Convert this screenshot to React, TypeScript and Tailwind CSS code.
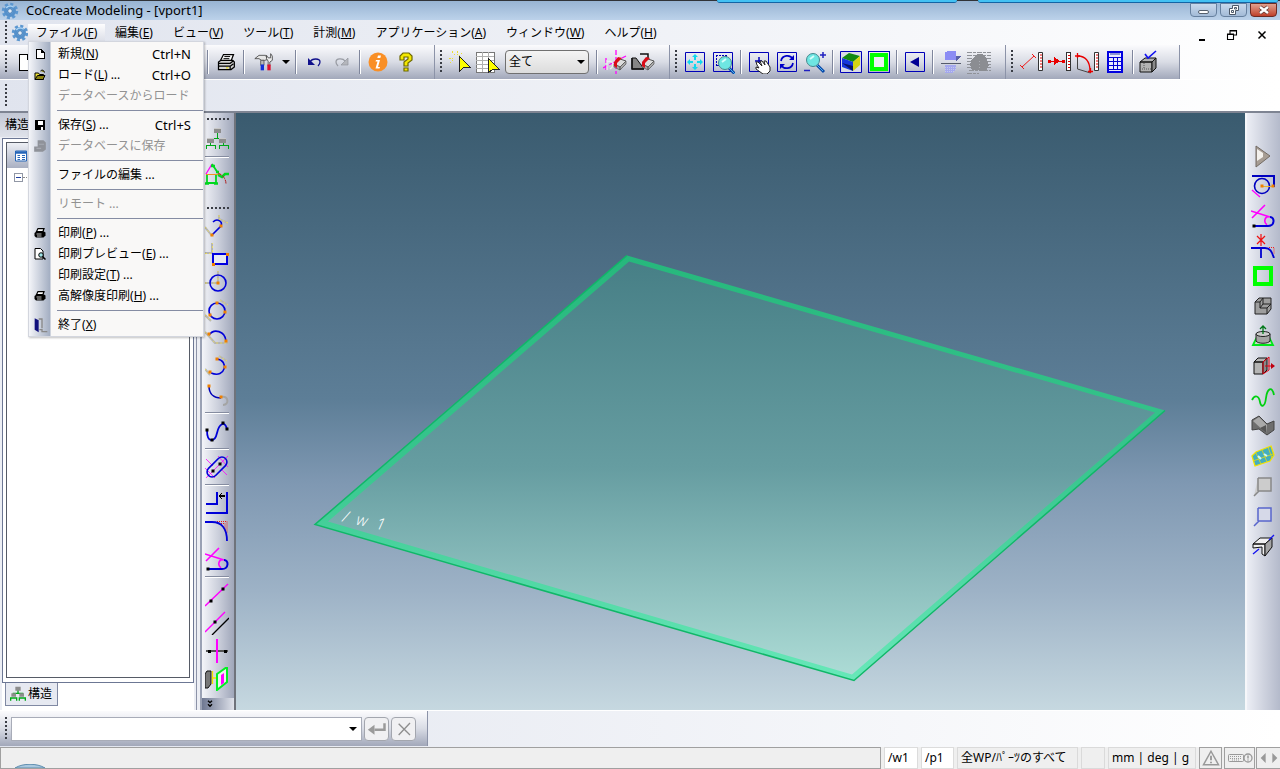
import type { ReactNode } from 'react'

interface IconProps {
  children: ReactNode
  className?: string
  smooth?: boolean
}

// Every tool drawing is made on a 24 x 24 grid
function Icon({ children, className = 'w-6 h-6', smooth = false }: IconProps) {
  return (
    <svg
      viewBox="0 0 24 24"
      className={`${className} shrink-0`}
      fill="none"
      shapeRendering={smooth ? 'auto' : 'crispEdges'}
      aria-hidden="true"
    >
      {children}
    </svg>
  )
}

const Gear = () => (
  <Icon className="w-[18px] h-[18px]" smooth>
    <circle cx="12" cy="12" r="9" stroke="#5c97d0" strokeWidth="4" strokeDasharray="4 3.07" />
    <circle cx="12" cy="12" r="6" fill="#6fa9dd" stroke="#5590ca" strokeWidth="4" />
    <path d="M7 8c2-3 7-4 10-1" stroke="#a9d2f3" strokeWidth="2" />
    <circle cx="12" cy="12" r="3" fill="#e2edf8" stroke="#2d65a4" />
  </Icon>
)

const NewDoc = () => (
  <Icon>
    <path d="M6 4h8l5 5v11H6z" fill="#fff" stroke="#000" />
    <path d="M14 4v5h5" stroke="#000" />
  </Icon>
)

const Printer = () => (
  <Icon className="w-5 h-5" smooth>
    <path d="M9 3h12l-3 8H5z" fill="#fff" stroke="#000" strokeWidth="1.500" />
    <path d="M10 5.500h7M9 8h7" stroke="#000" strokeWidth="1.200" />
    <path d="M3 12l3-2h14l2 2v6l-4 3H3z" fill="#d4d4d4" stroke="#000" strokeWidth="1.500" />
    <path d="M3 13.500h14l4-3M3 17h14v4M17 17l4-3" stroke="#000" strokeWidth="1.500" />
    <path d="M12 19h3" stroke="#e8d820" strokeWidth="1.500" />
  </Icon>
)

const Tools = () => (
  <Icon className="w-5 h-5" smooth>
    <path d="M1 8l5-4h8l2 5-3 1H9L6 8z" fill="#e6e6e6" stroke="#444" />
    <path d="M8 10h4v6H8z" fill="#bbb" stroke="#555" />
    <path d="M8 15h4v7H8z" fill="#1230d8" />
    <path d="M17 11l-2-3V4l2 3h3V2l2 3v5l-3 2v5h-2z" fill="#eee" stroke="#444" />
    <path d="M16 15h4v7h-4z" fill="#e01030" />
  </Icon>
)

const Undo = () => (
  <Icon smooth>
    <path d="M6 8v7h7z" fill="#10108c" />
    <path d="M8 12c2-4 10-4 10 0 0 2-1 3-2 4" stroke="#10108c" strokeWidth="1.300" />
  </Icon>
)

const Redo = () => (
  <Icon smooth>
    <path d="M18 8v7h-7z" fill="#b4b6bc" stroke="#93969e" strokeWidth=".7" />
    <path d="M15 11c-2-3-9-3-9 1 0 2 1 3 2 4" stroke="#999ca4" strokeWidth="1.300" />
  </Icon>
)

const Info = () => (
  <Icon smooth>
    <circle cx="12" cy="12" r="9.500" fill="#f98f26" />
    <path d="M12 5.500h3l-.7 2.500h-3zM10 10h4l-2 7h2l-.5 1.500H9.500l2-7H9.500z" fill="#fff" />
  </Icon>
)

const Help = () => (
  <Icon smooth>
    <path d="M6 9V6l3-3h6l3 3v4l-4 3v3h-4v-4l4-3V7h-4v3H6zM10 18h4v3h-4z" fill="#f4e800" stroke="#6d6800" strokeWidth="1.2" />
  </Icon>
)

const Pick = () => (
  <Icon>
    <path d="M4 1l3 4M9 1v4M1 8h4M14 3l-3 3M2 13l3-3" stroke="#eadf35" strokeDasharray="2 1" />
    <path d="M11 6l11 11h-6l-5 5z" fill="#ffff00" stroke="#222" />
  </Icon>
)

const PickList = () => (
  <Icon>
    <path d="M0 2h18v20H0z" fill="#fff" stroke="#777" />
    <path d="M0 6h18M0 10h18M0 14h18M0 18h18M6 2v20M12 2v20" stroke="#b0b0b0" />
    <path d="M12 8l11 11h-6l-5 4z" fill="#ffff00" stroke="#222" />
  </Icon>
)

const Eraser = () => (
  <>
    <path d="M11 14l6-5 6 2-6 6z" fill="#ddd" stroke="#555" />
    <path d="M11 14l6 3v3l-6-3zM17 17l6-6v3l-6 6z" fill="#aaa" stroke="#555" strokeWidth=".7" />
    <path d="M11 12l4-5 4 1-5 5v5l-3-2z" fill="#d80d18" />
  </>
)

const EraseGeometry = () => (
  <Icon smooth>
    <path d="M13 0v24M0 18l23-12M3 8v12" stroke="#f0f" strokeWidth="1.300" strokeDasharray="5 2" />
    <path d="M4 10v10M4 12c6-3 8 4 3 7M15 4h6M15 2v7" stroke="#eee" strokeWidth="1.300" />
    <Eraser />
  </Icon>
)

const EraseFace = () => (
  <Icon smooth>
    <path d="M1 8h4l8 11H1z" fill="#858585" stroke="#111" />
    <path d="M9 4h8v5M1 8v11h12" stroke="#111" strokeWidth="1.500" />
    <Eraser />
  </Icon>
)

const BlueFrame = ({ children }: { children: ReactNode }) => (
  <Icon smooth>
    <path d="M2.500 2.500h19v19h-19z" stroke="#0000b8" />
    {children}
  </Icon>
)

const Lens = () => (
  <>
    <path d="M14 15l7 7" stroke="#0848a8" strokeWidth="3" />
    <path d="M14 15l6 6" stroke="#4fb0f0" />
    <circle cx="10" cy="10" r="6.500" fill="#6ee6e2" stroke="#45888e" />
    <path d="M7 9l4-3" stroke="#d6fffb" strokeWidth="2" />
  </>
)

const FitAll = () => (
  <BlueFrame>
    <path d="M12 4l3 3h-2v3h-2V7H9zM12 20l3-3h-2v-3h-2v3H9zM4 12l3-3v2h3v2H7v2zM20 12l-3-3v2h-3v2h3v2z" fill="#12d8ee" />
  </BlueFrame>
)

const ZoomWindow = () => (
  <Icon smooth>
    <path d="M2.500 2.500h19v19h-19z" stroke="#0000b8" />
    <path d="M5 5.500h11M5.500 5v11M15.500 5v4M6 15.500h3" stroke="#0000b8" strokeDasharray="2 1" />
    <g transform="translate(4 3)"><Lens /></g>
  </Icon>
)

const Pan = () => (
  <BlueFrame>
    <path d="M8 11h7M12 7v6" stroke="#0000b8" strokeWidth="1.500" />
    <path d="M10 15l-1-3 2 0 4 4-2-5 2 0 3 4-1-4 2 0 4 6v4l-3 3h-4l-7-5 0-2 3 1z" fill="#fff" stroke="#222" />
  </BlueFrame>
)

const Rotate = () => (
  <BlueFrame>
    <path d="M6 11c1-6 9-7 12-2M18 13c-1 6-9 7-12 2" stroke="#0000c8" strokeWidth="1.700" />
    <path d="M19 5v5h-5zM5 19v-5h5z" fill="#0000c8" />
  </BlueFrame>
)

const Zoom = () => (
  <Icon smooth>
    <Lens />
    <path d="M17 5h6M20 2v6M1 20.500h6" stroke="#2020c0" strokeWidth="1.500" />
  </Icon>
)

const Shaded = () => (
  <Icon smooth>
    <path d="M1.500 1.500h21v21h-21z" fill="#d9dce6" stroke="#0000b8" />
    <path d="M3 8l7-5 11 3-7 6z" fill="#118a12" />
    <path d="M3 8l11 4v9L3 17z" fill="#1537dd" />
    <path d="M14 12l7-6v9l-7 6z" fill="#d6d512" />
    <path d="M3 13l11 8v-5z" fill="#071368" />
  </Icon>
)

const GreenFrame = () => (
  <Icon>
    <path d="M1.500 1.500h21v21h-21z" stroke="#0000b8" />
    <path d="M5 5h14v14H5z" fill="#eceef4" stroke="#00ff00" strokeWidth="4" />
  </Icon>
)

const PlainGreenFrame = () => (
  <Icon>
    <path d="M4 4h16v16H4z" stroke="#00ff00" strokeWidth="4" />
  </Icon>
)

const Previous = () => (
  <BlueFrame>
    <path d="M7 12l9-5v10z" fill="#000094" />
  </BlueFrame>
)

const Mirror = () => (
  <Icon>
    <path d="M6 2l3-1h8v9H6z" fill="#8b8cf4" />
    <path d="M17 6h5l-5 5z" fill="#5960a8" />
    <path d="M2 13h20" stroke="#555b6b" />
    <path d="M6 15h11v5l-4 3H6z" fill="#a4a8ee" />
    <path d="M6 17h11M6 19h11M6 21h9" stroke="#c4c8ec" strokeDasharray="1 1" />
  </Icon>
)

const Haze = () => (
  <Icon>
    <path d="M0 2h24M0 5h24M0 8h24M0 11h24M0 14h24M0 17h24M2 20h22M0 23h12" stroke="#8f9298" strokeDasharray="5 1 3 1" />
    <path d="M5 20l-2-5 2-6 5-5h5l5 5 2 6-3 6z" fill="#8b8d92" />
    <path d="M12 11v7" stroke="#aaacb3" strokeDasharray="1 2" />
  </Icon>
)

const Ruler = () => (
  <>
    <path d="M19.500 2.500h4v18h-4z" fill="#fff" stroke="#333" />
    <path d="M21 5h2M21 8h2M21 11h2M21 14h2M21 17h2" stroke="#e00000" />
  </>
)

const MeasureDistance = () => (
  <Icon smooth>
    <path d="M3 17L15 6M1 15l4 4M13 4l4 4" stroke="#f01818" />
    <Ruler />
  </Icon>
)

const MeasureHorizontal = () => (
  <Icon>
    <path d="M1 11h17" stroke="#e80000" />
    <path d="M1 10h3v3H1zM15 10h3v3h-3zM7 7l6 4-6 4z" fill="#e80000" />
    <Ruler />
  </Icon>
)

const MeasureAngle = () => (
  <Icon smooth>
    <path d="M2.500 5v14l13 4" stroke="#444" />
    <path d="M3 6c7 0 12 5 12 15" stroke="#e80000" strokeWidth="1.300" />
    <path d="M0 6h5M2.500 3v5M13 21.500h5M15.500 18v5" stroke="#e80000" strokeWidth="1.300" />
    <Ruler />
  </Icon>
)

const Calculator = () => (
  <Icon>
    <path d="M5 2h14v20H5z" fill="#e8ecff" stroke="#0000e0" strokeWidth="2" />
    <path d="M6 7h12M6 11h12M6 15h12M6 19h12M10 8v12M14 8v12" stroke="#0000d0" />
    <path d="M7 4h10" stroke="#8a96d0" strokeWidth="2" />
  </Icon>
)

const CheckPart = () => (
  <Icon smooth>
    <path d="M1 12l5-4h11l-4 4zM1 12h12v10H1z" fill="#b2b2b2" stroke="#111" />
    <path d="M13 12l4-4v10l-4 4z" fill="#898989" stroke="#111" />
    <path d="M5 13v6M3 19h9" stroke="#555" strokeDasharray="1 1" />
    <path d="M6 4l3 4 8-7" stroke="#1010f0" strokeWidth="1.600" />
  </Icon>
)

// Left tool strip

const PartTree = () => (
  <Icon>
    <path d="M12 6v5M5 15v-4h14v4M1 22v-4h9v4M14 22v-4h9v4M5 15v3M18 15v3" stroke="#00a818" />
    <path d="M9 1h7v5H9zM2 11h7v5H2zM14 11h7v5h-7z" fill="#8d8d8d" />
    <path d="M9 1h7M2 11h7M14 11h7" stroke="#c8c8c8" />
  </Icon>
)

const Redline = () => (
  <Icon smooth>
    <path d="M1 11L7 1" stroke="#f0f" strokeWidth="1.300" />
    <path d="M1 11.500h15" stroke="#f09020" />
    <path d="M2 12v8h9v-8M7 1l6 9" stroke="#00d820" strokeWidth="1.800" />
    <path d="M0 20.500h4M9 20.500h4M6 3h4M11 9h3M13 12l4 2 3-3h4" stroke="#00d820" strokeWidth="2.500" />
    <path d="M13 10c5 2 8 6 8 11" stroke="#b02020" strokeDasharray="4 1" />
  </Icon>
)

const Dot = ({ x, y, fill = '#f08000' }: { x: number; y: number; fill?: string }) => (
  <rect x={x - 1.5} y={y - 1.5} width="3" height="3" fill={fill} />
)

const Guide = ({ d }: { d: string }) => (
  <>
    <path d={d} stroke="#b4b4b4" strokeWidth="2" />
    <path d={d} stroke="#eadb65" strokeDasharray="2 2" />
  </>
)

const Polyline = () => (
  <Icon smooth>
    <Guide d="M0 12l7 9M14 0v5M14 4l9 4" />
    <path d="M7 20l9-9c2-5-4-8-8-4" stroke="#0000d8" strokeWidth="1.600" />
    <Dot x={7} y={20} /><Dot x={16} y={11} />
  </Icon>
)

const Rect = () => (
  <Icon>
    <Guide d="M0 10h7V0" />
    <path d="M8 11h14v10H8z" fill="#e8eaf2" stroke="#0000e0" strokeWidth="2" />
    <Dot x={22} y={11} /><Dot x={8} y={21} />
  </Icon>
)

const CircleCenter = () => (
  <Icon smooth>
    <Guide d="M0 12h13V0" />
    <circle cx="13" cy="12" r="8" stroke="#0000d8" strokeWidth="1.600" />
    <Dot x={13} y={12} />
  </Icon>
)

const CirclePoints = () => (
  <Icon smooth>
    <Guide d="M0 16l6 6M15 1l8 5" />
    <circle cx="12" cy="12" r="8" stroke="#0000d8" strokeWidth="1.600" />
    <Dot x={12} y={4} /><Dot x={20} y={13} /><Dot x={5} y={16} />
  </Icon>
)

const ArcCenter = () => (
  <Icon smooth>
    <Guide d="M0 5l10 11h13" />
    <path d="M4 8c5-7 16-4 17 6" stroke="#0000d8" strokeWidth="1.600" />
    <Dot x={4} y={7} /><Dot x={21} y={14} />
  </Icon>
)

const ArcPoints = () => (
  <Icon smooth>
    <Guide d="M0 14l5 6M14 1l8 5" />
    <path d="M12 4c12 1 9 20-6 14" stroke="#0000d8" strokeWidth="1.600" />
    <Dot x={12} y={4} /><Dot x={20} y={12} /><Dot x={5} y={17} />
  </Icon>
)

const ArcTangent = () => (
  <Icon smooth>
    <path d="M17 14c6-2 8 8 1 8" stroke="#a4a4a4" strokeWidth="2" />
    <path d="M4 3c0 8 5 12 12 12" stroke="#0000b8" strokeWidth="1.600" />
    <Dot x={4} y={3} /><Dot x={16} y={14} />
  </Icon>
)

const Spline = () => (
  <Icon smooth>
    <path d="M2 11c0 14 8 12 10 3s8-13 10-4" stroke="#0000d8" strokeWidth="1.800" />
    <Dot x={2} y={11} fill="#000" /><Dot x={7} y={21} fill="#000" />
    <Dot x={18} y={4} fill="#000" /><Dot x={22} y={10} fill="#000" />
  </Icon>
)

const Slot = () => (
  <Icon smooth>
    <path d="M1 23L23 1M0 13l10 10M13 1l10 11M1 4l7 7M16 14l6 6" stroke="#f0f" strokeWidth=".8" />
    <rect x="0" y="7" width="24" height="10" rx="5" transform="rotate(-45 12 12)" stroke="#0000d8" strokeWidth="1.600" />
    <Dot x={8} y={16} fill="#000" /><Dot x={15} y={9} fill="#000" />
  </Icon>
)

const Offset = () => (
  <Icon>
    <path d="M1 13h11V1M1 22h21V1" stroke="#0000d8" strokeWidth="2" />
    <path d="M14 5h6M17 2l-3 3 3 3" stroke="#000" strokeWidth="1.300" />
  </Icon>
)

const Fillet = () => (
  <Icon smooth>
    <path d="M12 2.500h10v11M14 4.500h6v7" stroke="#e81818" strokeDasharray="1 1" />
    <path d="M0 3h7c10 0 15 7 15 19" stroke="#0000d8" strokeWidth="1.800" />
  </Icon>
)

const TangentCurve = () => (
  <Icon smooth>
    <path d="M1 14L14 1M0 7l19 6M19 13c-5-2-7 5-3 8" stroke="#f0f" strokeWidth="1.600" />
    <path d="M3 22h14c7 0 7-9 2-9" stroke="#0000d8" strokeWidth="2" />
    <Dot x={3} y={22} fill="#000" />
  </Icon>
)

const ConstructionLine = () => (
  <Icon smooth>
    <path d="M0 23L23 1" stroke="#f0f" strokeWidth="1.500" />
    <Dot x={6} y={18} fill="#000" /><Dot x={18} y={6} fill="#000" />
  </Icon>
)

const ParallelLine = () => (
  <Icon smooth>
    <path d="M0 21L20 1" stroke="#f0f" strokeWidth="1.500" />
    <path d="M7 24L24 7" stroke="#000" strokeWidth="1.300" />
    <Dot x={10} y={11} fill="#000" />
  </Icon>
)

const CenterLine = () => (
  <Icon>
    <path d="M1 12h22" stroke="#555" strokeWidth="2" />
    <path d="M12 0v24" stroke="#f0f" strokeWidth="2" />
    <Dot x={4} y={12} fill="#000" /><Dot x={20} y={12} fill="#000" />
  </Icon>
)

const ProjectFace = () => (
  <Icon smooth>
    <path d="M0 7l2-3h4v13l-3 4H0z" fill="#777" stroke="#111" />
    <path d="M7.500 4v13M8 11h5" stroke="#f5e400" strokeWidth="1.300" />
    <path d="M12 7l10-7v15l-10 8z" fill="#eee" stroke="#00f020" strokeWidth="2" />
    <path d="M16 8l3-2v10l-3 2z" fill="#f0f" />
  </Icon>
)

// Right tool strip

const Play = () => (
  <Icon smooth>
    <path d="M5 2l14 10L5 23z" fill="#a79d94" stroke="#736b64" />
    <path d="M6 5l6 4v4l-6 4z" fill="#f4f1ed" />
  </Icon>
)

const Trim = () => (
  <Icon smooth>
    <path d="M1 2h22v11" stroke="#0000c0" strokeWidth="2" />
    <circle cx="11" cy="12" r="7.500" stroke="#0000c0" strokeWidth="1.600" />
    <path d="M1 16l8 7" stroke="#f0f" strokeWidth="1.300" />
    <path d="M11 12.500h11" stroke="#eab330" />
    <Dot x={11} y={12} /><Dot x={22} y={12} />
  </Icon>
)

const Split = () => (
  <Icon smooth>
    <path d="M6 2l8 8M14 2l-8 8M10 0v12" stroke="#f01010" strokeWidth="1.200" />
    <path d="M0 14h14c6 0 7 5 9 10M10 14v10" stroke="#0000d0" strokeWidth="1.800" />
    <path d="M18 13.500h5v6" stroke="#f02020" strokeDasharray="1 1" />
  </Icon>
)

const Machine = () => (
  <Icon smooth>
    <path d="M4 8l4-4h12v11l-4 5H4z" fill="#9e9e9e" stroke="#222" />
    <path d="M4 8h5v6h7v6M16 14l4-4M9 14l3-4h8M12 10V4M9 8l3-4" stroke="#222" />
  </Icon>
)

const Extrude = () => (
  <Icon smooth>
    <path d="M2 21l4-8h12l4 8z" fill="#c5d8c5" stroke="#00e818" strokeWidth="1.800" />
    <path d="M5 10v7c2 3 12 3 14 0v-7z" fill="#a4a4a4" stroke="#222" />
    <ellipse cx="12" cy="10" rx="7" ry="2.500" fill="#ccc" stroke="#222" />
    <path d="M12 10V2M9 5l3-3 3 3" stroke="#007818" strokeWidth="1.300" />
  </Icon>
)

const PullFace = () => (
  <Icon smooth>
    <path d="M3 8l4-4h9l-4 4zM3 8h9v12H3z" fill="#b4b4b4" stroke="#111" />
    <path d="M12 8l4-4v12l-4 4z" fill="#888" stroke="#111" />
    <path d="M12 8l6-5v13l-6 4z M14 12h9" stroke="#e00010" />
    <path d="M20 9l4 3-4 3z" fill="#c00010" />
  </Icon>
)

const Curve = () => (
  <Icon smooth>
    <path d="M1 16c3-6 7-4 8 2s5 5 6-4 6-13 8-3" stroke="#00d010" strokeWidth="1.800" />
  </Icon>
)

const Loft = () => (
  <Icon smooth>
    <path d="M1 6l7-4 8 8 7-3v9l-7 5-8-6-7 1z" fill="#6e6e6e" stroke="#444" />
    <path d="M2 7l6-4 8 8-1 8z" fill="#a9a9a9" />
    <path d="M9 14l6-3v8z" fill="#555" />
  </Icon>
)

const SurfacePatch = () => (
  <Icon smooth>
    <path d="M1 12l4-4 15-6 3 9-4 6-15 5z" fill="#44aebf" stroke="#f2e200" strokeWidth="1.300" />
    <path d="M2 17l20-7M5 9l5 11M11 6l5 12M17 3l4 11" stroke="#e8da10" strokeWidth=".8" />
    <path d="M7 12l3 3M13 10l3 2" stroke="#c8f8ff" strokeWidth="2" />
  </Icon>
)

const GrayTag = () => (
  <Icon smooth>
    <path d="M7 4h13v13H8l-5 5M7 17V4" fill="#ccc" stroke="#888" strokeWidth="1.500" />
  </Icon>
)

const BlueTag = () => (
  <Icon smooth>
    <path d="M7 4h13v13H8l-5 5M7 17V4" fill="#d6d9e8" stroke="#5865cc" strokeWidth="1.500" />
  </Icon>
)

const Bend = () => (
  <Icon smooth>
    <path d="M2 10l7-6h12l-7 6zM2 10h10l2 0v12l-3-2v-7l-9 1z" fill="#f0f0f0" stroke="#111" />
    <path d="M14 10l7-6v9l-7 9z" fill="#a4a4a4" stroke="#111" />
    <path d="M18 6l5-5M2 20l6-5" stroke="#1414f0" strokeWidth="1.300" />
  </Icon>
)

// File menu drawings

const MenuOpen = () => (
  <Icon className="w-3 h-3" smooth>
    <path d="M2 8h7l2 3h8v10H2z" fill="#e8de35" stroke="#000" strokeWidth="2" />
    <path d="M2 21l5-8h15l-4 8zM13 4c3-3 7-2 8 3" fill="#8c8410" stroke="#000" strokeWidth="2" />
  </Icon>
)

const MenuSave = () => (
  <Icon className="w-3 h-3">
    <path d="M2 2h20v20H2z" fill="#000" />
    <path d="M7 3h10v8H7z" fill="#fff" />
    <path d="M14 16h4v5h-4z" fill="#fff" />
  </Icon>
)

const MenuDatabase = () => (
  <Icon className="w-3.5 h-3.5" smooth>
    <path d="M8 2h10l4 4v12l-5 4H2v-9h6z" fill="#8f9299" />
    <path d="M10 9h9M6 16h8" stroke="#a7aab2" strokeWidth="2" />
  </Icon>
)

const MenuPreview = () => (
  <Icon className="w-3 h-3" smooth>
    <path d="M2 1h11l5 5v16H2z" fill="#fff" stroke="#000" strokeWidth="2" />
    <circle cx="14" cy="14" r="4.500" fill="#9fe4e8" stroke="#000" strokeWidth="2" />
    <path d="M17 17l6 6" stroke="#000" strokeWidth="3" />
  </Icon>
)

const MenuExit = () => (
  <Icon className="w-4 h-4" smooth>
    <path d="M4 2l6 3v18l-6-4z" fill="#10107c" />
    <path d="M10 3h5v14M11 19h4v3h8" stroke="#888" strokeWidth="2" />
  </Icon>
)

const MenuNew = () => (
  <Icon className="w-3 h-3">
    <path d="M5 3h9l6 6v12H5zM14 3v6h6" fill="#fff" stroke="#000" strokeWidth="2" />
  </Icon>
)

const MenuPrint = () => (
  <Icon className="w-3 h-3" smooth>
    <path d="M8 3h12l-2 6H5z" fill="#fff" stroke="#000" strokeWidth="2.500" />
    <path d="M1 12l4-3h15l3 2v6l-4 4H4l-3-3z" fill="#000" />
    <path d="M5 14h10M6 18h9" stroke="#fff" strokeWidth="1.500" />
  </Icon>
)

interface LabelProps {
  text: string
  hotkey?: string
  tail?: string
}

function Label({ text, hotkey, tail = '' }: LabelProps) {
  return (
    <span className="whitespace-pre">
      {text}
      {hotkey && <>(<u className="underline-offset-1">{hotkey}</u>)</>}
      {tail}
    </span>
  )
}

type MenuEntry = LabelProps & { icon?: ReactNode; shortcut?: string; disabled?: boolean }

const fileMenu: MenuEntry[][] = [
  [
    { text: '新規', hotkey: 'N', shortcut: 'Ctrl+N', icon: <MenuNew /> },
    { text: 'ロード', hotkey: 'L', tail: ' ...', shortcut: 'Ctrl+O', icon: <MenuOpen /> },
    { text: 'データベースからロード', disabled: true },
  ],
  [
    { text: '保存', hotkey: 'S', tail: ' ...', shortcut: 'Ctrl+S', icon: <MenuSave /> },
    { text: 'データベースに保存', disabled: true, icon: <MenuDatabase /> },
  ],
  [{ text: 'ファイルの編集 ...' }],
  [{ text: 'リモート ...', disabled: true }],
  [
    { text: '印刷', hotkey: 'P', tail: ' ...', icon: <MenuPrint /> },
    { text: '印刷プレビュー', hotkey: 'E', tail: ' ...', icon: <MenuPreview /> },
    { text: '印刷設定', hotkey: 'T', tail: ' ...' },
    { text: '高解像度印刷', hotkey: 'H', tail: ' ...', icon: <MenuPrint /> },
  ],
  [{ text: '終了', hotkey: 'X', icon: <MenuExit /> }],
]

const menus: LabelProps[] = [
  { text: '編集', hotkey: 'E' },
  { text: 'ビュー', hotkey: 'V' },
  { text: 'ツール', hotkey: 'T' },
  { text: '計測', hotkey: 'M' },
  { text: 'アプリケーション', hotkey: 'A' },
  { text: 'ウィンドウ', hotkey: 'W' },
  { text: 'ヘルプ', hotkey: 'H' },
]

function FileMenu() {
  return (
    <div className="absolute left-0 top-full z-20 w-44 border border-[#d3d6de] bg-[linear-gradient(90deg,#f4f5f9,#a3aec2_21px,#f9f8f7_22px)] py-px shadow-[1px_1px_2px_rgba(0,0,0,0.25)]">
      {fileMenu.map((group, i) => (
        <div key={i}>
          {i > 0 && <div className="ml-7 flex h-2 items-center"><div className="h-px w-full bg-[#858ca3]" /></div>}
          {group.map((item) => (
            <button
              key={item.text}
              disabled={item.disabled}
              className="flex h-[21px] w-full items-center pr-3 text-left text-black disabled:text-[#929292]"
            >
              <span className="flex w-[21px] shrink-0 justify-center">{item.icon}</span>
              <span className="ml-2 flex-1"><Label text={item.text} hotkey={item.hotkey} tail={item.tail} /></span>
              {item.shortcut && <span className="text-[13px] leading-4">{item.shortcut}</span>}
            </button>
          ))}
        </div>
      ))}
    </div>
  )
}

function Tool({ name, children }: { name: string; children: ReactNode }) {
  return (
    <button aria-label={name} className="flex h-7 w-7 shrink-0 items-center justify-center">
      {children}
    </button>
  )
}

const Grip = () => (
  <div className="flex w-[11px] shrink-0 justify-center">
    <div className="h-6 w-0.5 bg-[repeating-linear-gradient(180deg,#3a3d45_0_2px,transparent_2px_4px)]" />
  </div>
)

const Divider = () => (
  <div className="flex w-2 shrink-0 justify-center">
    <div className="h-6 w-0.5 border-l border-[#7f869c] bg-white" />
  </div>
)

const HGrip = () => (
  <div className="mx-auto h-0.5 w-6 bg-[repeating-linear-gradient(90deg,#3a3d45_0_2px,transparent_2px_4px)]" />
)

const HDivider = () => (
  <div className="flex h-2 w-7 shrink-0 items-center px-0.5">
    <div className="h-0.5 w-full border-t border-[#858ca0] bg-white" />
  </div>
)

const Caret = () => <div className="border-x-4 border-t-4 border-x-transparent border-t-black" />

function Toolbar({ children, className = '' }: { children: ReactNode; className?: string }) {
  return (
    <div className={`flex h-full shrink-0 items-center border-r border-[#8c93a8] bg-linear-to-b from-[#fbfbfd] via-[#d9dce5] to-[#a2a8ba] ${className}`}>
      {children}
    </div>
  )
}

function TitleBar() {
  return (
    <header className="relative flex h-5 shrink-0 items-center border-t border-[#303338] bg-linear-to-b from-[#98b4d3] to-[#bcd2ea] pl-px pr-[3px]">
      <Gear />
      <h1 className="ml-[7px] flex-1 pb-0.5 text-[13px] leading-4">CoCreate Modeling - [vport1]</h1>
      <div className="absolute right-[323px] top-[-1px] h-[3px] w-60 rounded-b-sm border-b border-[#1464a4] bg-[#43c1f3]" />
      <div className="absolute right-0.5 top-[-1px] h-[3px] w-[300px] rounded-b-sm border-b border-[#1464a4] bg-[#43c1f3]" />
      <div className="flex gap-[3px] pb-px">
        <button aria-label="最小化" className="flex h-3.5 w-[27px] items-end justify-center rounded-b-sm border border-[#66809f] bg-linear-to-b from-[#c8d9ec] to-[#a3bbd7] pb-0.5">
          <span className="h-1 w-[11px] rounded-xs border border-[#55606e] bg-white" />
        </button>
        <button aria-label="元に戻す" className="flex h-3.5 w-[27px] items-center justify-center rounded-b-sm border border-[#66809f] bg-linear-to-b from-[#c8d9ec] to-[#a3bbd7]">
          <Icon className="w-3 h-3" smooth>
            <path d="M9 3h12v10h-6v8H3V9h6z" fill="#fff" stroke="#4c5868" strokeWidth="2" />
            <path d="M7 13h4v4H7zM13 7h4v3h-4z" stroke="#4c5868" strokeWidth="2" />
          </Icon>
        </button>
        <button aria-label="閉じる" className="flex h-3.5 w-[27px] items-center justify-center rounded-b-sm border border-[#6d2a22] bg-linear-to-b from-[#e0a08f] to-[#bf3f29]">
          <Icon className="w-3 h-3" smooth>
            <path d="M4 6l16 12M20 6L4 18" stroke="#5d3430" strokeWidth="8" />
            <path d="M4 6l16 12M20 6L4 18" stroke="#fff" strokeWidth="5" />
          </Icon>
        </button>
      </div>
    </header>
  )
}

function MenuBar() {
  return (
    <nav className="flex h-[25px] shrink-0 items-center">
      <Grip />
      <Gear />
      <div className="relative -ml-px h-[17px]">
        <button className="h-[17px] w-[77px] bg-linear-to-b from-[#fdfdfe] to-[#dcdfe8]">
          <Label text="ファイル" hotkey="F" />
        </button>
        <FileMenu />
      </div>
      {menus.map((m) => (
        <button key={m.text} className="px-2.5"><Label text={m.text} hotkey={m.hotkey} /></button>
      ))}
      <div className="ml-auto flex gap-3.5 self-end pb-0.5 pr-2.5">
        <button aria-label="ウィンドウを最小化" className="flex h-4 w-4 items-end justify-center pb-0.5"><span className="h-0.5 w-1.5 bg-black" /></button>
        <button aria-label="ウィンドウを元に戻す" className="flex h-4 w-4 items-center justify-center">
          <Icon className="w-3 h-3" smooth><path d="M8 10V3h13v9h-5M8 4h13M3 10h12v11H3zM3 11h12" stroke="#000" strokeWidth="2.200" /></Icon>
        </button>
        <button aria-label="ウィンドウを閉じる" className="flex h-4 w-4 items-center justify-center">
          <Icon className="w-3 h-3" smooth><path d="M5 5l14 14M19 5L5 19" stroke="#000" strokeWidth="3" /></Icon>
        </button>
      </div>
    </nav>
  )
}

function ToolbarRow() {
  return (
    <div className="flex h-[34px] shrink-0">
      <Toolbar className="w-[435px] justify-between pr-3.5">
        <div className="flex items-center">
          <Grip />
          <Tool name="新規"><NewDoc /></Tool>
        </div>
        <div className="flex items-center">
          <Divider />
          <Tool name="印刷"><Printer /></Tool>
          <Divider />
          <button aria-label="ツール設定" className="flex h-7 w-11 items-center justify-center gap-2 pl-1"><Tools /><Caret /></button>
          <Divider />
          <Tool name="元に戻す"><Undo /></Tool>
          <Tool name="やり直し"><Redo /></Tool>
          <Divider />
          <Tool name="情報"><Info /></Tool>
          <Tool name="ヘルプ"><Help /></Tool>
        </div>
      </Toolbar>
      <Toolbar className="pr-3">
        <Grip />
        <Tool name="選択"><Pick /></Tool>
        <Tool name="選択リスト"><PickList /></Tool>
        <div className="relative ml-[3px] flex items-center">
          <select aria-label="選択フィルタ" className="h-6 w-[84px] appearance-none rounded-sm border border-[#707070] bg-linear-to-b from-[#f4f4f4] to-[#dcdcdc] pl-[3px] text-xs">
            <option>全て</option>
          </select>
          <div className="pointer-events-none absolute right-1"><Caret /></div>
        </div>
        <div className="w-1" />
        <Divider />
        <Tool name="形状を削除"><EraseGeometry /></Tool>
        <Tool name="面を削除"><EraseFace /></Tool>
      </Toolbar>
      <Toolbar className="pr-3">
        <Grip />
        <Tool name="全体表示"><FitAll /></Tool>
        <Tool name="窓拡大"><ZoomWindow /></Tool>
        <Divider />
        <Tool name="移動"><Pan /></Tool>
        <Tool name="回転"><Rotate /></Tool>
        <Tool name="拡大縮小"><Zoom /></Tool>
        <Divider />
        <Tool name="シェーディング"><Shaded /></Tool>
        <Tool name="ワークプレーン表示"><GreenFrame /></Tool>
        <Divider />
        <Tool name="前のビュー"><Previous /></Tool>
        <Divider />
        <Tool name="反射"><Mirror /></Tool>
        <Tool name="かすみ"><Haze /></Tool>
      </Toolbar>
      <Toolbar className="pr-3.5">
        <Grip />
        <Tool name="距離計測"><MeasureDistance /></Tool>
        <Tool name="水平計測"><MeasureHorizontal /></Tool>
        <Tool name="角度計測"><MeasureAngle /></Tool>
        <Tool name="計算機"><Calculator /></Tool>
        <Divider />
        <Tool name="パーツ検査"><CheckPart /></Tool>
      </Toolbar>
    </div>
  )
}

function StructurePanel() {
  return (
    <aside className="flex w-[197px] shrink-0 flex-col border-r border-[#8c93a8] bg-[#eceef4]">
      <h2 className="flex h-6 items-center bg-linear-to-b from-[#c3c8d5] to-[#dfe2ea] pl-[5px] text-xs">構造</h2>
      <div className="mx-0.5 mt-px flex flex-1 flex-col border border-[#6c7794] bg-white p-[3px] pb-1">
        <div className="flex-1 border border-[#565b66]">
          <div className="flex h-[25px] items-center bg-linear-to-b from-[#eef0f5] to-[#a9b0c2] pl-2">
            <Icon className="w-3 h-3" smooth>
              <path d="M1 2h22v20H1z" fill="#fff" stroke="#2666b8" strokeWidth="2" />
              <path d="M1 5h22" stroke="#2666b8" strokeWidth="5" />
              <path d="M5 11h5M5 15h5M5 19h5M14 11h6M14 15h6M14 19h6" stroke="#2666b8" strokeWidth="2" />
            </Icon>
          </div>
          <div className="flex items-center pl-[7px] pt-[5px]">
            <button aria-label="折りたたむ" className="flex h-[9px] w-[9px] items-center justify-center border border-[#9197a5]">
              <span className="h-px w-[5px] bg-[#2040a0]" />
            </button>
            <span className="w-4 border-t border-dotted border-[#888]" />
          </div>
        </div>
      </div>
      <div className="mx-0.5 flex h-[27px] bg-white pl-[3px]">
        <button className="flex h-[23px] w-[53px] items-center gap-0.5 border border-t-0 border-[#8089a3] bg-[#e6e9f1] pl-1 text-xs">
          <Icon className="w-4 h-4" smooth>
            <path d="M12 6v5M5 15v-4h14v4M1 22v-4h9v4M14 22v-4h9v4" stroke="#00a818" strokeWidth="2" />
            <path d="M8 1h8v6H8zM2 11h7v5H2zM14 11h7v5h-7z" fill="#8d8d8d" />
          </Icon>
          構造
        </button>
      </div>
    </aside>
  )
}

function LeftTools() {
  return (
    <div className="flex w-9 shrink-0 flex-col border-l-2 border-r-2 border-l-[#9aa1b4] border-r-[#6f737b] bg-linear-to-r from-[#f4f5f9] via-[#ccd0dc] to-[#a0a7ba] pl-px">
      <div className="flex h-3 items-center"><HGrip /></div>
      <Tool name="構造ツリー"><PartTree /></Tool>
      <HDivider />
      <Tool name="レッドライン"><Redline /></Tool>
      <div className="flex h-6 items-end pb-1"><HGrip /></div>
      <Tool name="線分"><Polyline /></Tool>
      <Tool name="長方形"><Rect /></Tool>
      <Tool name="円 中心"><CircleCenter /></Tool>
      <Tool name="円 3点"><CirclePoints /></Tool>
      <Tool name="円弧 中心"><ArcCenter /></Tool>
      <Tool name="円弧 3点"><ArcPoints /></Tool>
      <Tool name="円弧 接線"><ArcTangent /></Tool>
      <HDivider />
      <Tool name="スプライン"><Spline /></Tool>
      <HDivider />
      <Tool name="長穴"><Slot /></Tool>
      <HDivider />
      <Tool name="オフセット"><Offset /></Tool>
      <Tool name="フィレット"><Fillet /></Tool>
      <Tool name="接線"><TangentCurve /></Tool>
      <HDivider />
      <Tool name="補助線"><ConstructionLine /></Tool>
      <Tool name="平行線"><ParallelLine /></Tool>
      <Tool name="中心線"><CenterLine /></Tool>
      <Tool name="投影"><ProjectFace /></Tool>
      <button aria-label="その他" className="-ml-px mt-auto flex h-3 items-center bg-linear-to-r from-[#6f7892] to-[#dfe2ea] pl-1">
        <Icon className="w-2 h-2" smooth><path d="M6 2l6 6 6-6M6 13l6 6 6-6" stroke="#000" strokeWidth="4" /></Icon>
      </button>
    </div>
  )
}

const rightTools: [string, ReactNode][] = [
  ['実行', <Play />],
  ['トリム', <Trim />],
  ['接線', <TangentCurve />],
  ['分割', <Split />],
  ['ワークプレーン', <PlainGreenFrame />],
  ['加工', <Machine />],
  ['押し出し', <Extrude />],
  ['面移動', <PullFace />],
  ['曲線', <Curve />],
  ['ロフト', <Loft />],
  ['曲面', <SurfacePatch />],
  ['注記', <GrayTag />],
  ['ラベル', <BlueTag />],
  ['曲げ', <Bend />],
]

function RightTools() {
  return (
    <div className="flex w-[35px] shrink-0 flex-col gap-0.5 border-l-2 border-[#f6f7fa] bg-linear-to-r from-[#eceef5] via-[#cfd3df] to-[#b4bacb] pl-0.5 pt-[29px]">
      {rightTools.map(([name, icon]) => (
        <Tool key={name} name={name}>{icon}</Tool>
      ))}
    </div>
  )
}

function Viewport() {
  return (
    <main className="min-w-0 flex-1 bg-[linear-gradient(180deg,#3a5b6f,#5d7e97_48%,#7f98b2_62%,#9db2c6_80%,#c6d8e0)]">
      <svg viewBox="236 114 1009 596" className="h-full w-full" role="img" aria-label="ワークプレーン">
        <defs>
          <linearGradient id="plane" x1="0" y1="0" x2="0" y2="1">
            <stop offset="0" stopColor="#477f86" />
            <stop offset="0.5" stopColor="#669da1" />
            <stop offset="1" stopColor="#acdbd5" />
          </linearGradient>
          <linearGradient id="rim" x1="0" y1="0" x2="0" y2="1">
            <stop offset="0" stopColor="#26b87c" />
            <stop offset="0.5" stopColor="#38c68e" />
            <stop offset="1" stopColor="#68e8b9" />
          </linearGradient>
        </defs>
        <path d="M627 256L1165 411L854 681L315 525Z" fill="url(#rim)" />
        <path d="M629 262L1155 413L852 675L328 522Z" fill="url(#plane)" />
        <path d="M627 256L315 525L854 681L1165 411" fill="none" stroke="#10b768" strokeWidth="1.500" />
        <text x="342 356 376" y="522" transform="rotate(12 342 522)" fill="#fff" fontSize="16" fontStyle="italic" fontWeight="300" className="font-['Open_Sans',sans-serif]">/w1</text>
      </svg>
    </main>
  )
}

function CommandBar() {
  return (
    <div className="flex h-[37px] shrink-0 border-t border-white pb-px">
      <Toolbar className="w-[428px]">
        <Grip />
        <div className="flex h-6 flex-1 items-center border border-[#a8acb8] bg-white pr-1">
          <input aria-label="コマンド" className="h-full min-w-0 flex-1 px-1 text-xs outline-none" />
          <button aria-label="履歴"><Caret /></button>
        </div>
        <button aria-label="確定" className="ml-0.5 flex h-6 w-[25px] items-center justify-center rounded-sm border border-[#a3a6ae] bg-[#f0f0f2]">
          <Icon className="w-5 h-5" smooth><path d="M21 5v8H9" stroke="#9a9a9a" strokeWidth="3" /><path d="M9 7v12l-8-6z" fill="#9a9a9a" /></Icon>
        </button>
        <button aria-label="取消" className="ml-0.5 mr-[11px] flex h-6 w-[25px] items-center justify-center rounded-sm border border-[#a3a6ae] bg-[#f0f0f2]">
          <Icon className="w-4 h-4" smooth><path d="M4 4l17 17M21 3L4 21" stroke="#8e8e8e" strokeWidth="2" /></Icon>
        </button>
      </Toolbar>
    </div>
  )
}

function StatusBar() {
  return (
    <footer className="flex h-[22px] shrink-0 items-stretch gap-[3px] bg-[#efefef] text-xs leading-5">
      <div className="flex flex-1 items-end border border-[#a0a0a0] pl-3.5">
        <svg viewBox="0 0 30 4" className="h-1 w-[30px]" aria-hidden="true">
          <path d="M0 4c8-5 22-5 30 0z" fill="#a9c8de" stroke="#5d8cae" />
        </svg>
      </div>
      <div className="w-[34px] border border-[#dcdcdc] bg-white pl-[3px]">/w1</div>
      <div className="w-[33px] border border-[#dcdcdc] bg-white pl-[3px]">/p1</div>
      <div className="w-[121px] whitespace-nowrap border border-[#dadada] pl-[3px]">全WP/ﾊﾟｰﾂのすべて</div>
      <div className="w-6 border border-[#dadada]" />
      <div className="w-[88px] whitespace-nowrap border border-[#dadada] pl-[3px]">mm | deg | g</div>
      <button aria-label="警告" className="flex w-[23px] items-center justify-center border border-[#a0a0a0]">
        <Icon className="w-[18px] h-[18px]" smooth>
          <path d="M12 3l10 18H2z" stroke="#999" strokeWidth="2" />
          <path d="M12 9v6M12 17v2" stroke="#999" strokeWidth="2.500" />
        </Icon>
      </button>
      <button aria-label="キーボード" className="-ml-px flex w-[31px] items-center justify-center border border-[#a0a0a0]">
        <svg viewBox="0 0 26 14" className="h-3.5 w-[26px]" fill="none" aria-hidden="true">
          <rect x="1.500" y="3.500" width="15" height="7" rx="1" stroke="#999" />
          <path d="M3 5.500h12M3 7.500h12M5 9h8" stroke="#999" strokeDasharray="1 1" />
          <circle cx="21" cy="7" r="4" stroke="#999" strokeWidth="1.300" />
          <path d="M21 4.500v3M21 8.500v1" stroke="#999" strokeWidth="1.500" />
        </svg>
      </button>
      <button aria-label="スクロール" className="-ml-0.5 flex w-6 items-center justify-center border border-r-0 border-[#a0a0a0]">
        <Icon className="w-5 h-5" smooth><path d="M8 6v12l-6-6zM16 6v12l6-6z" fill="#999" /></Icon>
      </button>
    </footer>
  )
}

export default function App() {
  return (
    <div className="flex h-screen flex-col overflow-hidden bg-linear-to-r from-[#e0e4ee] to-white font-['Noto_Sans','Noto_Sans_CJK_JP',sans-serif] text-xs text-black">
      <TitleBar />
      <MenuBar />
      <ToolbarRow />
      <div className="flex h-8 shrink-0 items-center border-t border-white"><Grip /></div>
      <div className="flex min-h-0 flex-1 border-t-2 border-[#7e8492]">
        <StructurePanel />
        <div className="w-[3px] shrink-0 bg-[#eceef4]" />
        <LeftTools />
        <Viewport />
        <RightTools />
      </div>
      <CommandBar />
      <StatusBar />
    </div>
  )
}
